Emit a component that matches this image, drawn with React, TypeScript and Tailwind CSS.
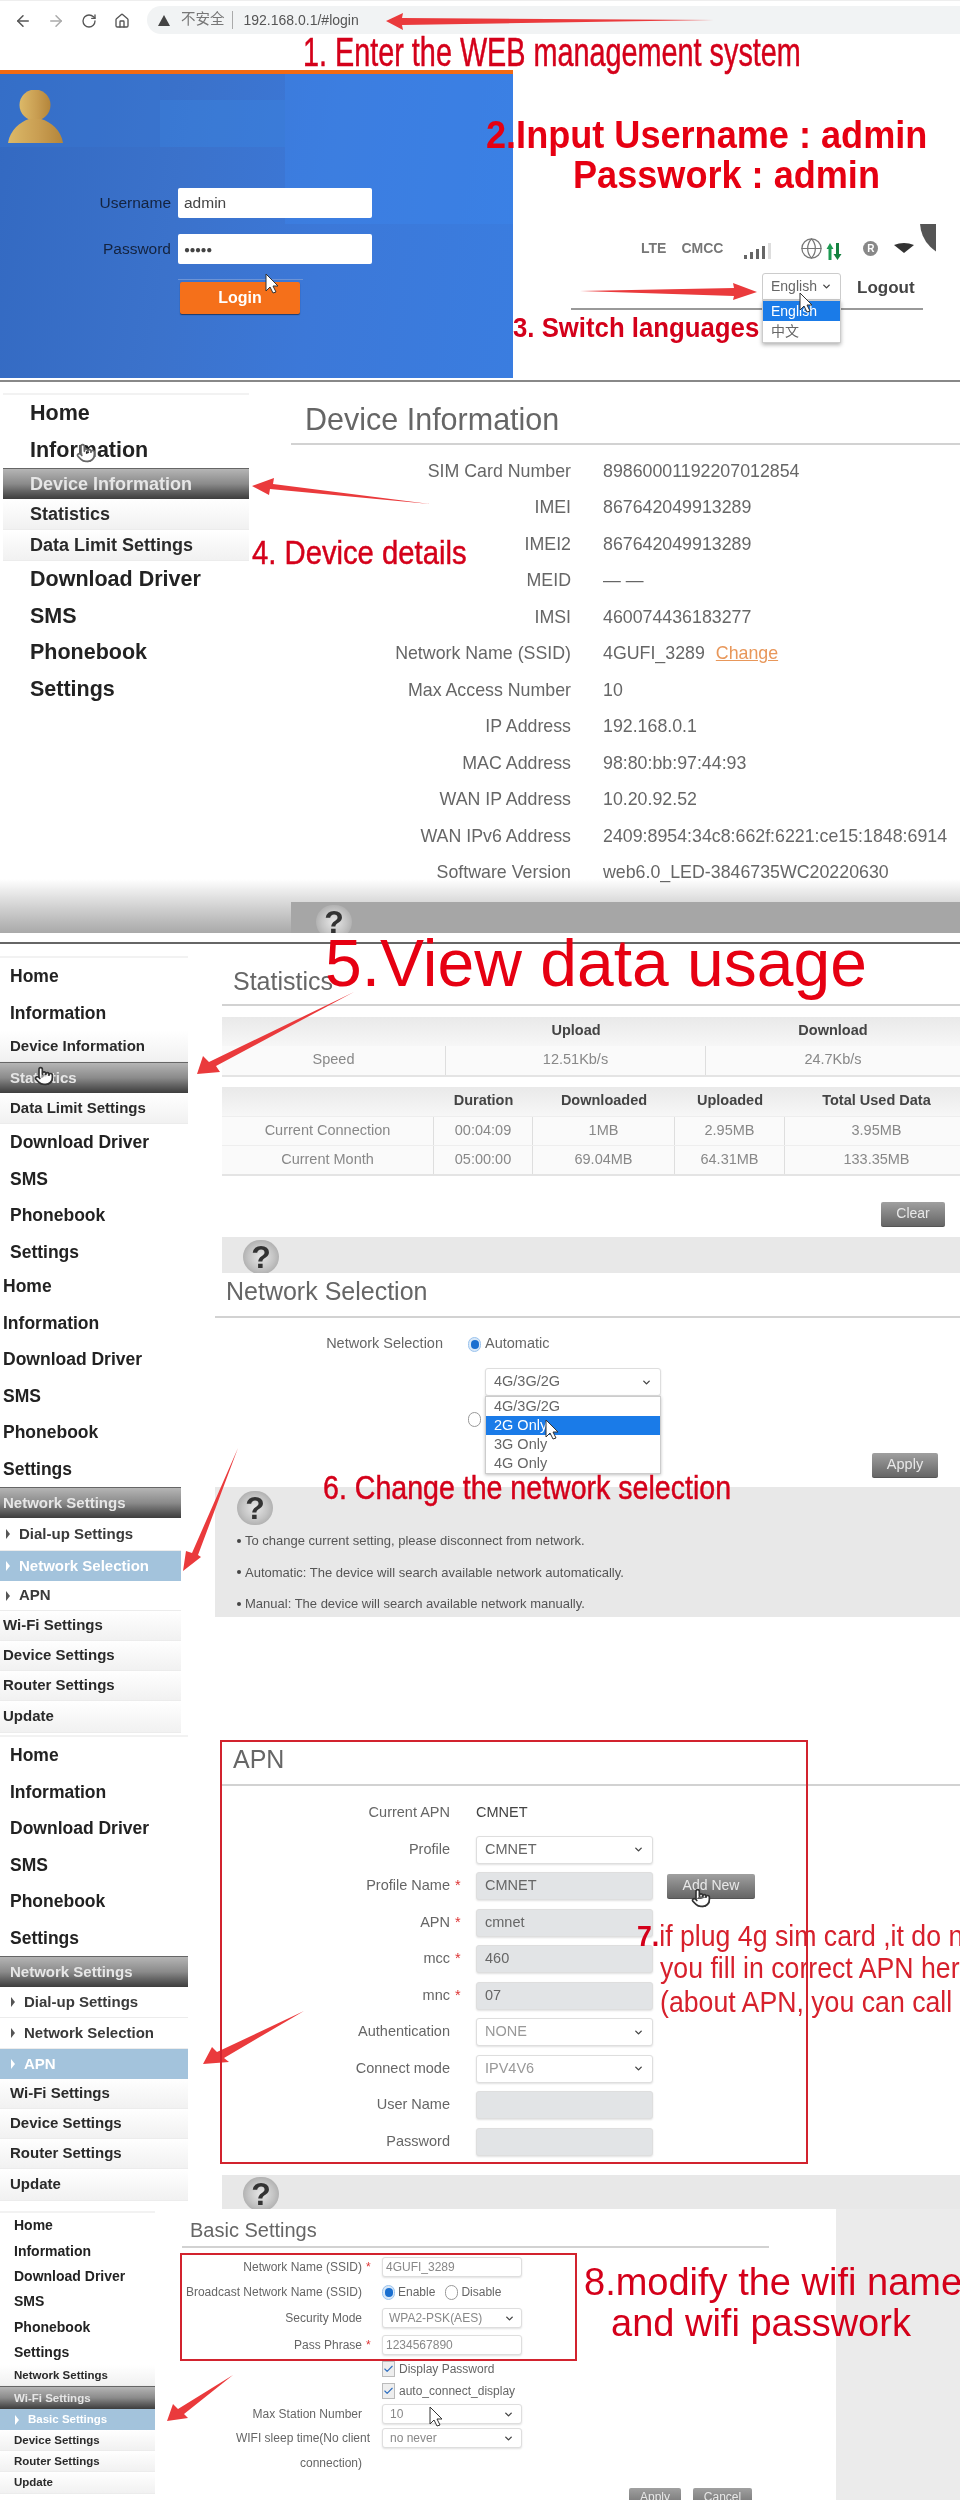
import React from 'react'
import { ArrowLeft, ArrowRight, Check, ChevronDown, Globe, House, Pointer, RotateCw } from 'lucide-react'

type NavItem = { label: string; kind: 'top' | 'sub' | 'bar' | 'leaf' | 'leafOn'; h: number }

const top = (label: string, h: number): NavItem => ({ label, kind: 'top', h })
const sub = (label: string, h = 31): NavItem => ({ label, kind: 'sub', h })
const bar = (label: string, h = 31): NavItem => ({ label, kind: 'bar', h })
const leaf = (label: string, h = 31): NavItem => ({ label, kind: 'leaf', h })
const leafOn = (label: string, h = 30): NavItem => ({ label, kind: 'leafOn', h })

function NavList({
  items,
  topText,
  subText,
  pad,
  leafPad,
  noLine,
}: {
  items: NavItem[]
  topText: string
  subText: string
  pad: string
  leafPad: string
  noLine?: boolean
}) {
  return (
    <div className={`flex flex-col ${noLine ? '' : 'border-t-2 border-[#f2f2f2]'}`}>
      {items.map((item) => {
        if (item.kind === 'top') {
          return (
            <div key={item.label} style={{ height: item.h }} className={`flex items-center font-bold text-[#222] ${topText} ${pad}`}>
              {item.label}
            </div>
          )
        }
        if (item.kind === 'sub') {
          return (
            <div
              key={item.label}
              style={{ height: item.h }}
              className={`flex items-center border-b border-[#ececec] bg-linear-to-b from-white to-[#f1f1f1] font-bold text-[#2a2a2a] ${subText} ${pad}`}
            >
              {item.label}
            </div>
          )
        }
        if (item.kind === 'bar') {
          return (
            <div
              key={item.label}
              style={{ height: item.h }}
              className={`flex items-center border-t border-[#666] bg-linear-to-b from-[#b5b5b5] via-[#8a8a8a] to-[#3d3d3d] font-bold text-[#e6e6e6] ${subText} ${pad}`}
            >
              {item.label}
            </div>
          )
        }
        const on = item.kind === 'leafOn'
        return (
          <div
            key={item.label}
            style={{ height: item.h }}
            className={`flex items-center gap-[9px] font-bold ${subText} ${leafPad} ${
              on ? 'bg-[#a3c3dc] text-white' : 'border-b border-[#ececec] bg-white text-[#3a3a3a]'
            }`}
          >
            <span className={`h-0 w-0 border-y-[5px] border-l-[4px] border-y-transparent ${on ? 'border-l-white' : 'border-l-[#555]'}`} />
            {item.label}
          </div>
        )
      })}
    </div>
  )
}

function HelpIcon({ className = '' }: { className?: string }) {
  return (
    <div
      className={`flex h-[34px] w-9 shrink-0 items-center justify-center rounded-full bg-radial from-[#e8e8e8] via-[#c4c4c4] to-[#9a9a9a] text-[32px] leading-none font-bold text-[#333] ${className}`}
    >
      ?
    </div>
  )
}

function PageTitle({ children, className }: { children: React.ReactNode; className: string }) {
  return <div className={`border-b-2 border-[#d2d2d2] text-[#666] ${className}`}>{children}</div>
}

function GreyButton({ children, className }: { children: React.ReactNode; className: string }) {
  return (
    <div
      className={`flex items-center justify-center rounded-[2px] border-b border-[#555] bg-linear-to-b from-[#a0a0a0] to-[#666] text-[#e8e8e8] ${className}`}
    >
      {children}
    </div>
  )
}

function Field({
  value,
  select,
  off,
  className,
}: {
  value?: string
  select?: boolean
  off?: boolean
  className: string
}) {
  return (
    <div
      className={`flex shrink-0 items-center justify-between rounded-[3px] border border-[#dedede] shadow-[0_1px_2px_rgba(0,0,0,0.12)] ${
        off ? 'bg-[#e2e4e6] text-[#666]' : 'bg-white'
      } ${className}`}
    >
      <span>{value}</span>
      {select && <ChevronDown size={11} strokeWidth={3} className="text-[#444]" />}
    </div>
  )
}

function Radio({ on }: { on?: boolean }) {
  return (
    <span className={`flex h-[15px] w-[13px] shrink-0 items-center justify-center rounded-full border ${on ? 'border-[#9cc4ee] bg-[#d8e8f8]' : 'border-[#999] bg-white'}`}>
      {on && <span className="h-[9px] w-[8px] rounded-full bg-[#1a6fd0]" />}
    </span>
  )
}

function Tick() {
  return (
    <span className="flex h-[16px] w-[13px] shrink-0 items-center justify-center border border-[#bbb] bg-[#eee]">
      <Check size={12} strokeWidth={2.5} className="text-[#2f6fc0]" />
    </span>
  )
}

function Login() {
  return (
    <div className="relative h-[304px] w-[513px] overflow-hidden bg-[linear-gradient(100deg,#3369c1_0%,#3b72cb_35%,#3c78d8_62%,#3a7de0_100%)]">
      <div className="absolute top-0 left-0 h-[73px] w-[160px] bg-[#3a79d5]/35" />
      <div className="absolute top-[26px] left-[160px] h-[47px] w-[125px] bg-[#3a84e2]/40" />
      <div className="absolute top-0 left-[285px] h-[150px] w-[228px] bg-[#3b86ee]/40" />
      <svg className="absolute top-[16px] left-[7px]" width="58" height="54" viewBox="0 0 58 54">
        <defs>
          <linearGradient id="gold" x1="0" y1="0" x2="1" y2="0">
            <stop offset="0" stopColor="#dcb968" />
            <stop offset="0.55" stopColor="#c99e52" />
            <stop offset="1" stopColor="#b4853a" />
          </linearGradient>
        </defs>
        <circle cx="28" cy="15" r="15.5" fill="url(#gold)" />
        <path d="M1 53 C3 40 13 32 22 29 L34 29 C44 32 54 40 56 53 Z" fill="url(#gold)" />
      </svg>
      <div className="relative flex flex-col pt-[114px] text-[15.5px]">
        <div className="flex h-[30px] items-center">
          <span className="w-[171px] text-right text-[#14233f]">Username</span>
          <div className="ml-[7px] flex h-[30px] w-[194px] items-center rounded-[2px] bg-white px-[6px] text-[#444]">admin</div>
        </div>
        <div className="mt-[16px] flex h-[30px] items-center">
          <span className="w-[171px] text-right text-[#14233f]">Password</span>
          <div className="ml-[7px] flex h-[30px] w-[194px] items-center rounded-[2px] bg-white px-[6px] text-[10px] tracking-[-0.5px] text-[#444]">●●●●●</div>
        </div>
        <div className="mt-[15px] ml-[178px] w-[125px] border-t border-[#6d93d4] pt-[2px]">
          <div className="ml-[2px] flex h-[32px] w-[120px] items-center justify-center rounded-[2px] bg-[#f5701a] text-[16px] font-bold text-white shadow-[0_1px_1px_rgba(0,0,0,0.5)]">
            Login
          </div>
        </div>
      </div>
    </div>
  )
}

function Browser() {
  return (
    <div className="flex h-[70px] items-start border-t border-[#eee] pt-[5px]">
      <div className="flex h-[30px] w-[147px] items-center text-[#555]">
        <ArrowLeft size={18} className="ml-[14px]" />
        <ArrowRight size={18} className="ml-[15px] text-[#aaa]" />
        <RotateCw size={16} className="ml-[16px]" />
        <House size={16} className="ml-[17px]" />
      </div>
      <div className="flex h-[28px] flex-1 items-center rounded-l-full bg-[#f1f3f4] pl-[11px] text-[14px] text-[#555]">
        <span className="h-0 w-0 border-x-[6px] border-b-[11px] border-x-transparent border-b-[#444]" />
        <span className="ml-[11px] text-[14.5px] text-[#777]">不安全</span>
        <span className="ml-[7px] h-[18px] w-px bg-[#aaa]" />
        <span className="ml-[11px]">192.168.0.1/#login</span>
      </div>
    </div>
  )
}

function LoginSide() {
  return (
    <div className="flex flex-1 flex-col pt-[159px] pl-[58px]">
      <div className="flex h-[30px] items-center text-[14px] font-bold text-[#777]">
        <span className="ml-[70px]">LTE</span>
        <span className="ml-[15px]">CMCC</span>
        <svg className="mt-[6px] ml-[21px]" width="30" height="18" viewBox="0 0 30 18">
          <rect x="0" y="13" width="3" height="4" fill="#666" />
          <rect x="6" y="10" width="3" height="7" fill="#666" />
          <rect x="12" y="7" width="3" height="10" fill="#666" />
          <rect x="18" y="4" width="3" height="13" fill="#666" />
          <rect x="24" y="1" width="3" height="16" fill="#ddd" />
        </svg>
        <Globe size={23} strokeWidth={1.3} className="ml-[26px] text-[#777]" />
        <svg width="18" height="18" viewBox="0 0 18 18" className="mt-[8px] ml-[2px]">
          <path d="M5 0 L8.5 6 H6.5 V17 H3.5 V6 H1.5 Z" fill="#1c9a52" />
          <path d="M11 0 H14 V11 H16.5 L12.5 17 L8.5 11 H11 Z" fill="#14803f" />
        </svg>
        <span className="ml-[20px] flex h-[15px] w-[15px] items-center justify-center rounded-full bg-[#888] text-[10px] text-white">R</span>
        <svg className="ml-[16px]" width="20" height="10" viewBox="0 0 20 10">
          <path d="M0 2 Q10 -2 20 2 L10 10 Z" fill="#333" />
        </svg>
      </div>
      <div className="mt-[10px] flex h-[37px] w-[352px] items-start border-b-2 border-[#999]">
        <div className="relative ml-[191px] w-[79px]">
          <div className="flex h-[27px] items-center justify-between rounded-t-[3px] border border-[#ccc] bg-white px-[8px] text-[14px] text-[#666]">
            English
            <ChevronDown size={11} strokeWidth={3} className="text-[#444]" />
          </div>
          <div className="absolute top-[27px] left-0 w-[79px] border border-[#ccc] bg-white text-[14px] shadow-[0_2px_4px_rgba(0,0,0,0.3)]">
            <div className="flex h-[20px] items-center bg-[#1a7be8] px-[8px] text-white">English</div>
            <div className="flex h-[21px] items-center px-[8px] text-[#666]">中文</div>
          </div>
        </div>
        <span className="mt-[2px] ml-[16px] text-[17px] font-bold text-[#444]">Logout</span>
      </div>
      <div className="absolute top-[224px] right-[24px] h-[36px] w-[16px] overflow-hidden">
        <div className="-mt-[37px] h-[70px] w-[70px] rounded-full bg-[#555]" />
      </div>
    </div>
  )
}

const infoRows: [string, string][] = [
  ['SIM Card Number', '89860001192207012854'],
  ['IMEI', '867642049913289'],
  ['IMEI2', '867642049913289'],
  ['MEID', '— —'],
  ['IMSI', '460074436183277'],
  ['Network Name (SSID)', '4GUFI_3289'],
  ['Max Access Number', '10'],
  ['IP Address', '192.168.0.1'],
  ['MAC Address', '98:80:bb:97:44:93'],
  ['WAN IP Address', '10.20.92.52'],
  ['WAN IPv6 Address', '2409:8954:34c8:662f:6221:ce15:1848:6914'],
  ['Software Version', 'web6.0_LED-3846735WC20220630'],
]

function DeviceInfo() {
  return (
    <div className="flex h-[562px] flex-col border-t-2 border-[#888]">
      <div className="relative flex h-[497px]">
        <div className="mt-[11px] ml-[3px] w-[246px]">
          <NavList
            topText="text-[21.5px]"
            subText="text-[18px]"
            pad="pl-[27px]"
            leafPad="pl-[27px]"
            items={[
              top('Home', 36.5),
              top('Information', 36.5),
              bar('Device Information'),
              sub('Statistics'),
              sub('Data Limit Settings'),
              top('Download Driver', 36.5),
              top('SMS', 36.5),
              top('Phonebook', 36.5),
              top('Settings', 36.5),
            ]}
          />
        </div>
        <div className="ml-[42px] flex-1">
          <PageTitle className="h-[63px] pt-[19px] pl-[14px] text-[30.5px] leading-[36px]">Device Information</PageTitle>
          <div className="flex flex-col pt-[8px] text-[17.8px] text-[#666]">
            {infoRows.map(([label, value]) => (
              <div key={label} className="flex h-[36.5px] items-center">
                <span className="w-[280px] text-right">{label}</span>
                <span className="ml-[32px] whitespace-nowrap">{value}</span>
                {value === '4GUFI_3289' && <span className="ml-[11px] text-[#e8975a] underline">Change</span>}
              </div>
            ))}
          </div>
        </div>
      </div>
      <div className="flex h-[54px] items-end bg-linear-to-b from-white to-[#a9a9a9]">
        <div className="ml-[291px] flex h-[31px] flex-1 overflow-hidden bg-[#a6a6a6] pl-[25px]">
          <HelpIcon className="mt-[3px]" />
        </div>
      </div>
    </div>
  )
}

const speedCell = 'flex items-center justify-center border-r border-[#dedede]'
const usage: [string, string, string, string, string][] = [
  ['Current Connection', '00:04:09', '1MB', '2.95MB', '3.95MB'],
  ['Current Month', '05:00:00', '69.04MB', '64.31MB', '133.35MB'],
]

function Statistics() {
  return (
    <div className="flex h-[331px] border-t-2 border-[#666]">
      <div className="mt-[12px] w-[188px]">
        <NavList
          topText="text-[17.5px]"
          subText="text-[15px]"
          pad="pl-[10px]"
          leafPad="pl-[10px]"
          items={[
            top('Home', 36.5),
            top('Information', 36.5),
            sub('Device Information'),
            bar('Statistics'),
            sub('Data Limit Settings'),
            top('Download Driver', 36.5),
            top('SMS', 36.5),
            top('Phonebook', 36.5),
            top('Settings', 36.5),
          ]}
        />
      </div>
      <div className="ml-[34px] flex flex-1 flex-col">
        <PageTitle className="h-[62px] pt-[22px] pl-[11px] text-[25px] leading-[30px]">Statistics</PageTitle>
        <div className="mt-[11px] border-b-2 border-[#e4e4e4] text-[14.5px]">
          <div className="grid h-[29px] grid-cols-[224px_260px_254px] bg-linear-to-b from-[#e9e9e9] to-[#f7f7f7] font-bold text-[#444]">
            <span />
            <span className="flex items-center justify-center">Upload</span>
            <span className="flex items-center justify-center">Download</span>
          </div>
          <div className="grid h-[29px] grid-cols-[224px_260px_254px] bg-[#fafafa] text-[#888]">
            <span className={speedCell}>Speed</span>
            <span className={speedCell}>12.51Kb/s</span>
            <span className="flex items-center justify-center">24.7Kb/s</span>
          </div>
        </div>
        <div className="mt-[10px] border-b-2 border-[#e4e4e4] text-[14.5px]">
          <div className="grid h-[29px] grid-cols-[212px_99px_142px_110px_175px] bg-linear-to-b from-[#e9e9e9] to-[#f7f7f7] font-bold text-[#444]">
            <span />
            <span className="flex items-center justify-center">Duration</span>
            <span className="flex items-center justify-center">Downloaded</span>
            <span className="flex items-center justify-center">Uploaded</span>
            <span className="flex items-center justify-center pl-2">Total Used Data</span>
          </div>
          {usage.map((row) => (
            <div key={row[0]} className="grid h-[29px] grid-cols-[212px_99px_142px_110px_175px] border-t border-[#eee] bg-[#fafafa] text-[#888]">
              {row.map((cell, i) => (
                <span key={i} className={i < 4 ? speedCell : 'flex items-center justify-center pl-2'}>
                  {cell}
                </span>
              ))}
            </div>
          ))}
        </div>
        <GreyButton className="mt-[26px] mr-[15px] h-[26px] w-[64px] self-end text-[14px]">Clear</GreyButton>
        <div className="mt-[10px] flex h-[36px] overflow-hidden bg-[#e8e8e8] pl-[21px]">
          <HelpIcon className="mt-[3px]" />
        </div>
      </div>
    </div>
  )
}

function NetworkSelection() {
  return (
    <div className="flex h-[460px]">
      <div className="-mt-[5px] w-[181px]">
        <NavList
          noLine
          topText="text-[17.5px]"
          subText="text-[15px]"
          pad="pl-[3px]"
          leafPad="pl-[6px]"
          items={[
            top('Home', 36.5),
            top('Information', 36.5),
            top('Download Driver', 36.5),
            top('SMS', 36.5),
            top('Phonebook', 36.5),
            top('Settings', 36.5),
            bar('Network Settings'),
            leaf('Dial-up Settings', 33),
            leafOn('Network Selection'),
            leaf('APN', 30),
            sub('Wi-Fi Settings', 30),
            sub('Device Settings', 30),
            sub('Router Settings', 30),
            sub('Update', 32),
          ]}
        />
      </div>
      <div className="ml-[34px] flex-1">
        <PageTitle className="h-[45px] pt-[3px] pl-[11px] text-[25px] leading-[30px]">Network Selection</PageTitle>
        <div className="flex h-[169px] flex-col text-[14.5px] text-[#666]">
          <div className="mt-[16px] flex h-[20px] items-center">
            <span className="w-[228px] text-right">Network Selection</span>
            <span className="ml-[25px]">
              <Radio on />
            </span>
            <span className="ml-[4px]">Automatic</span>
          </div>
          <div className="mt-[14px] flex">
            <span className="mt-[44px] ml-[253px]">
              <Radio />
            </span>
            <div className="relative ml-[4px] h-[27px] w-[176px]">
              <Field value="4G/3G/2G" select className="h-[28px] w-[176px] px-[8px]" />
              <div className="absolute top-[28px] left-0 w-[176px] border border-[#ccc] bg-white shadow-[0_1px_3px_rgba(0,0,0,0.25)]">
                <div className="flex h-[19px] items-center px-[8px]">4G/3G/2G</div>
                <div className="flex h-[19px] items-center bg-[#1a7be8] px-[8px] text-white">2G Only</div>
                <div className="flex h-[19px] items-center px-[8px]">3G Only</div>
                <div className="flex h-[19px] items-center px-[8px]">4G Only</div>
              </div>
            </div>
            <GreyButton className="mt-[85px] ml-[211px] h-[25px] w-[66px]">Apply</GreyButton>
          </div>
        </div>
        <div className="h-[130px] bg-[#e8e8e8] pt-[4px] pl-[22px] text-[13px] text-[#555]">
          <HelpIcon />
          {[
            'To change current setting, please disconnect from network.',
            'Automatic: The device will search available network automatically.',
            'Manual: The device will search available network manually.',
          ].map((line) => (
            <div key={line} className="flex h-[31.5px] items-center">
              <span className="mr-[4px] h-[4px] w-[4px] rounded-full bg-[#444]" />
              {line}
            </div>
          ))}
        </div>
      </div>
    </div>
  )
}

const apnRows: { label: string; star?: boolean; value?: string; kind: 'text' | 'select' | 'input'; dim?: boolean }[] = [
  { label: 'Current APN', value: 'CMNET', kind: 'text' },
  { label: 'Profile', value: 'CMNET', kind: 'select' },
  { label: 'Profile Name', star: true, value: 'CMNET', kind: 'input' },
  { label: 'APN', star: true, value: 'cmnet', kind: 'input' },
  { label: 'mcc', star: true, value: '460', kind: 'input' },
  { label: 'mnc', star: true, value: '07', kind: 'input' },
  { label: 'Authentication', value: 'NONE', kind: 'select', dim: true },
  { label: 'Connect mode', value: 'IPV4V6', kind: 'select', dim: true },
  { label: 'User Name', kind: 'input' },
  { label: 'Password', kind: 'input' },
]

function Apn() {
  return (
    <div className="flex h-[476px]">
      <div className="mt-[2px] w-[188px]">
        <NavList
          topText="text-[17.5px]"
          subText="text-[15px]"
          pad="pl-[10px]"
          leafPad="pl-[11px]"
          items={[
            top('Home', 36.5),
            top('Information', 36.5),
            top('Download Driver', 36.5),
            top('SMS', 36.5),
            top('Phonebook', 36.5),
            top('Settings', 36.5),
            bar('Network Settings'),
            leaf('Dial-up Settings'),
            leaf('Network Selection'),
            leafOn('APN'),
            sub('Wi-Fi Settings', 30),
            sub('Device Settings', 30),
            sub('Router Settings', 30),
            sub('Update', 32),
          ]}
        />
      </div>
      <div className="ml-[34px] flex flex-1 flex-col">
        <PageTitle className="h-[53px] pt-[11px] pl-[11px] text-[25px] leading-[30px]">APN</PageTitle>
        <div className="flex flex-col pt-[9px] text-[14.5px] text-[#666]">
          {apnRows.map((row) => (
            <div key={row.label} className="flex h-[36.5px] items-center">
              <span className="w-[228px] text-right">{row.label}</span>
              <span className="w-[26px] pl-[5px] text-[#d33]">{row.star ? '*' : ''}</span>
              {row.kind === 'text' ? (
                <span className="text-[#444]">{row.value}</span>
              ) : (
                <Field
                  value={row.value}
                  select={row.kind === 'select'}
                  off={row.kind === 'input'}
                  className={`h-[28px] w-[177px] px-[8px] ${row.dim ? 'text-[#999]' : ''}`}
                />
              )}
              {row.label === 'Profile Name' && <GreyButton className="ml-[14px] h-[25px] w-[88px] text-[14px]">Add New</GreyButton>}
            </div>
          ))}
        </div>
        <div className="mt-auto flex h-[34px] overflow-hidden bg-[#e8e8e8] pl-[21px]">
          <HelpIcon className="mt-[2px]" />
        </div>
      </div>
    </div>
  )
}

function BasicSettings() {
  return (
    <div className="flex h-[291px] overflow-hidden">
      <div className="mt-[2px] w-[155px]">
        <NavList
          topText="text-[14px]"
          subText="text-[11.5px]"
          pad="pl-[14px]"
          leafPad="pl-[15px]"
          items={[
            top('Home', 25.4),
            top('Information', 25.4),
            top('Download Driver', 25.4),
            top('SMS', 25.4),
            top('Phonebook', 25.4),
            top('Settings', 25.4),
            sub('Network Settings', 21),
            bar('Wi-Fi Settings', 23),
            leafOn('Basic Settings', 21),
            sub('Device Settings', 21),
            sub('Router Settings', 21),
            sub('Update', 22),
          ]}
        />
      </div>
      <div className="ml-[27px] flex-1 text-[12px] text-[#666]">
        <PageTitle className="h-[39px] w-[587px] pt-[9px] pl-[8px] text-[20px] leading-[24px]">Basic Settings</PageTitle>
        <div className="mt-[9px] flex h-[20px] items-center">
          <span className="w-[180px] text-right">Network Name (SSID)</span>
          <span className="w-[20px] pl-[4px] text-[#d33]">*</span>
          <Field value="4GUFI_3289" className="h-[20px] w-[140px] px-[3px] text-[#888]" />
        </div>
        <div className="flex h-[30px] items-center">
          <span className="w-[180px] text-right">Broadcast Network Name (SSID)</span>
          <span className="w-[20px]" />
          <Radio on />
          <span className="ml-[3px]">Enable</span>
          <span className="ml-[10px]">
            <Radio />
          </span>
          <span className="ml-[3px]">Disable</span>
        </div>
        <div className="flex h-[22px] items-center">
          <span className="w-[180px] text-right">Security Mode</span>
          <span className="w-[20px]" />
          <Field value="WPA2-PSK(AES)" select className="h-[20px] w-[140px] px-[6px] text-[#888]" />
        </div>
        <div className="mt-[1px] flex h-[30px] items-center">
          <span className="w-[180px] text-right">Pass Phrase</span>
          <span className="w-[20px] pl-[4px] text-[#d33]">*</span>
          <Field value="1234567890" className="h-[20px] w-[140px] px-[3px] text-[#888]" />
        </div>
        <div className="flex h-[18px] items-center pl-[200px]">
          <Tick />
          <span className="ml-[4px]">Display Password</span>
        </div>
        <div className="flex h-[26px] items-center pl-[200px]">
          <Tick />
          <span className="ml-[4px]">auto_connect_display</span>
        </div>
        <div className="flex h-[20px] items-center">
          <span className="w-[180px] text-right">Max Station Number</span>
          <span className="w-[20px]" />
          <Field value="10" select className="h-[20px] w-[140px] px-[7px] text-[#888]" />
        </div>
        <div className="flex h-[28px] items-center">
          <span className="w-[188px] text-right whitespace-nowrap">WIFI sleep time(No client</span>
          <span className="w-[12px]" />
          <Field value="no never" select className="h-[20px] w-[140px] px-[7px] text-[#888]" />
        </div>
        <div className="flex h-[22px] items-center">
          <span className="w-[180px] text-right">connection)</span>
        </div>
        <div className="mt-[14px] ml-[447px] flex gap-[12px]">
          <GreyButton className="h-[24px] w-[52px] items-start">Apply</GreyButton>
          <GreyButton className="h-[24px] w-[59px] items-start">Cancel</GreyButton>
        </div>
      </div>
      <div className="w-[124px] bg-[#ebebeb]" />
    </div>
  )
}

function Note({ children, className }: { children: React.ReactNode; className: string }) {
  return <span className={`absolute origin-left leading-none whitespace-nowrap ${className}`}>{children}</span>
}

function Arrows() {
  return (
    <svg className="pointer-events-none absolute top-0 left-0" width="960" height="2500" viewBox="0 0 960 2500">
      <g fill="#ea3a3c">
        <polygon points="386,21 403,13 402,18 714,20 402,25 403,30" />
        <polygon points="757,292 733,283 734,288 580,291 734,296 733,300" />
        <polygon points="252,486 274,478 273,484 430,504 270,489 269,495" />
        <polygon points="197,1074 203,1056 209,1062 354,992 216,1066 220,1072" />
        <polygon points="183,1571 186,1551 192,1553 238,1448 198,1555 201,1557" />
        <polygon points="203,2064 212,2047 217,2052 304,2011 224,2058 229,2062" />
        <polygon points="167,2421 173,2404 178,2409 233,2375 184,2414 188,2418" />
      </g>
      <g fill="#fff" stroke="#333" strokeWidth="1">
        <path d="M266 274 L266 291 L270 287 L273 293 L276 292 L273 286 L278 286 Z" />
        <path d="M800 293 L800 310 L804 306 L807 312 L810 311 L807 305 L812 305 Z" />
        <path d="M546 1420 L546 1437 L550 1433 L553 1439 L556 1438 L553 1432 L558 1432 Z" />
        <path d="M430 2407 L430 2424 L434 2420 L437 2426 L440 2425 L437 2419 L442 2419 Z" />
      </g>
    </svg>
  )
}

export default function App() {
  return (
    <div className="relative h-[2500px] w-[960px] overflow-hidden bg-white font-['Liberation_Sans','Noto_Sans_CJK_SC',sans-serif] blur-[0.4px]">
      <div className="relative h-[380px]">
        <Browser />
        <div className="h-[4px] w-[513px] bg-[#f26a12]" />
        <div className="flex">
          <Login />
          <LoginSide />
        </div>
      </div>
      <DeviceInfo />
      <Statistics />
      <NetworkSelection />
      <Apn />
      <BasicSettings />

      <Arrows />
      <Pointer size={20} className="absolute top-[443px] left-[76px] fill-white text-[#666]" />
      <Pointer size={20} className="absolute top-[1066px] left-[34px] fill-white text-[#333]" />
      <Pointer size={20} className="absolute top-[1888px] left-[691px] fill-white text-[#333]" />

      <div className="absolute top-[1740px] left-[220px] h-[424px] w-[588px] border-2 border-[#d2232e]" />
      <div className="absolute top-[2253px] left-[180px] h-[108px] w-[397px] border-2 border-[#d2232e]" />

      <Note className="top-[32px] left-[303px] scale-x-[0.72] text-[40px] text-[#d4001a] [-webkit-text-stroke:0.5px]">1. Enter the WEB management system</Note>
      <Note className="top-[116px] left-[486px] scale-x-[0.95] text-[38px] font-bold text-[#e60012]">2.Input Username : admin</Note>
      <Note className="top-[156px] left-[573px] scale-x-[0.95] text-[38px] font-bold text-[#e60012]">Passwork : admin</Note>
      <Note className="top-[314px] left-[513px] scale-x-[0.92] text-[28px] font-bold text-[#d4001a]">3. Switch languages</Note>
      <Note className="top-[535px] left-[252px] scale-x-[0.86] text-[34px] text-[#d4001a] [-webkit-text-stroke:0.5px]">4. Device details</Note>
      <Note className="top-[930px] left-[325px] text-[66px] text-[#e60012]">5.View data usage</Note>
      <Note className="top-[1470px] left-[323px] scale-x-[0.84] text-[34px] text-[#d4001a] [-webkit-text-stroke:0.5px]">6. Change the network selection</Note>
      <Note className="top-[1922px] left-[637px] scale-x-[0.92] text-[29px] text-[#d7202c]">
        <b className="text-[#d4001a]">7.</b>if plug 4g sim card ,it do not need
      </Note>
      <Note className="top-[1954px] left-[660px] scale-x-[0.92] text-[29px] text-[#d7202c]">you fill in correct APN here</Note>
      <Note className="top-[1988px] left-[660px] scale-x-[0.92] text-[29px] text-[#d7202c]">(about APN, you can call</Note>
      <Note className="top-[2263px] left-[584px] text-[38px] text-[#d4001a]">8.modify the wifi name</Note>
      <Note className="top-[2304px] left-[611px] text-[38px] text-[#d4001a]">and wifi passwork</Note>
    </div>
  )
}
